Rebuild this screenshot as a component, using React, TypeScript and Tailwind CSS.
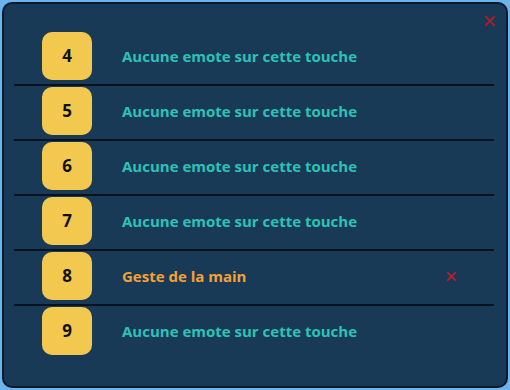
import React from "react";

const rows: { key: string; label: string; active?: boolean }[] = [
  { key: "4", label: "Aucune emote sur cette touche" },
  { key: "5", label: "Aucune emote sur cette touche" },
  { key: "6", label: "Aucune emote sur cette touche" },
  { key: "7", label: "Aucune emote sur cette touche" },
  { key: "8", label: "Geste de la main", active: true },
  { key: "9", label: "Aucune emote sur cette touche" },
];

function XIcon({ className }: { className?: string }) {
  return (
    <svg viewBox="0 0 12 12" className={className} fill="none" stroke="currentColor" strokeWidth="2" strokeLinecap="square">
      <path d="M2 2 L10 10 M10 2 L2 10" />
    </svg>
  );
}

export default function App() {
  return (
    <div className="w-[510px] h-[390px] bg-[#6cb4ee] p-[2px]" style={{ fontFamily: '"Open Sans", sans-serif' }}>
      <div className="relative w-full h-full rounded-[10px] border-2 border-[#0b1b2b] bg-[#193a56] pt-[27px] pl-[10px] pr-[12px]">
        <button className="absolute right-[10px] top-[11px] w-[12px] h-[12px] text-[#a3202d]">
          <XIcon className="w-[12px] h-[12px]" />
        </button>
        <div className="flex flex-col">
          {rows.map((r, i) => (
            <div
              key={r.key}
              className={`flex items-start pt-[1px] pb-[4px] ${i < rows.length - 1 ? "border-b-2 border-[#06121d]" : ""}`}
            >
              <div className="ml-[28px] w-[50px] h-[48px] rounded-[10px] bg-[#f2c94e] flex items-center justify-center text-[17px] font-bold text-[#111]">
                {r.key}
              </div>
              <div className="flex-1 flex items-center h-[48px] pl-[30px] pr-[30px]">
                <span className={`text-[15px] font-bold ${r.active ? "text-[#f4a135]" : "text-[#2cc3b5]"}`}>
                  {r.label}
                </span>
                {r.active && (
                  <span className="ml-auto mr-[7px] text-[#b4202d]">
                    <XIcon className="w-[11px] h-[11px]" />
                  </span>
                )}
              </div>
            </div>
          ))}
        </div>
      </div>
    </div>
  );
}
